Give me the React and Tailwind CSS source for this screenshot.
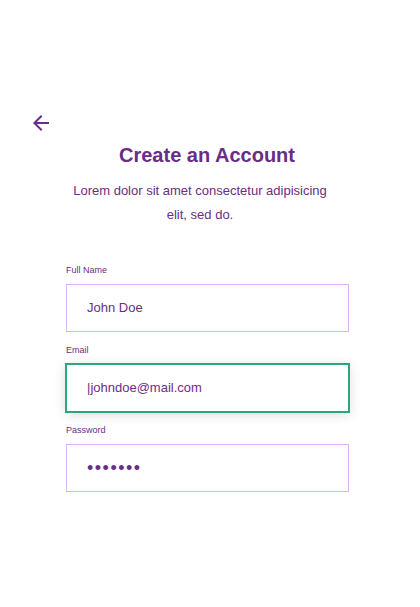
import React from 'react';

const font = { fontFamily: '"Liberation Sans", Arial, sans-serif' };

function Field({ label, children, active }) {
  return (
    <div className="flex flex-col mb-3">
      <label className="text-[9px] leading-[12px] text-[#6b2d87] mb-2">{label}</label>
      <div
        className={
          active
            ? 'h-12 border border-[#2aa87c] outline-2 -outline-offset-1 outline-[#2aa87c] bg-white flex items-center pl-5 shadow-[0_2px_12px_rgba(0,0,0,0.16)]'
            : 'h-12 border border-[#dcb0f2] bg-white flex items-center pl-5'
        }
      >
        {children}
      </div>
    </div>
  );
}

export default function App() {
  return (
    <div className="w-[420px] h-[607px] bg-white pt-[111px]" style={font}>
      <div className="pl-[29px]">
        <svg width="24" height="24" viewBox="0 0 24 24" fill="#6b2d87">
          <path d="M20 11H7.83l5.59-5.59L12 4l-8 8 8 8 1.41-1.41L7.83 13H20v-2z" />
        </svg>
      </div>

      <h1 className="w-[414px] mt-[6px] text-center text-[20px] leading-[28px] font-bold text-[#6a2c86]">
        Create an Account
      </h1>
      <p className="ml-[65px] w-[270px] mt-[10px] text-center text-[13px] leading-[24px] text-[#6b2d87]">
        Lorem dolor sit amet consectetur adipisicing elit, sed do.
      </p>

      <form className="ml-[66px] w-[283px] mt-[37px]">
        <Field label="Full Name">
          <span className="text-[13px] text-[#6b2d87]">John Doe</span>
        </Field>
        <Field label="Email" active>
          <span className="text-[13px] text-[#6b2d87]">|johndoe@mail.com</span>
        </Field>
        <Field label="Password">
          <span className="text-[18px] leading-none tracking-[1.5px] text-[#6b2d87]">•••••••</span>
        </Field>
      </form>
    </div>
  );
}
